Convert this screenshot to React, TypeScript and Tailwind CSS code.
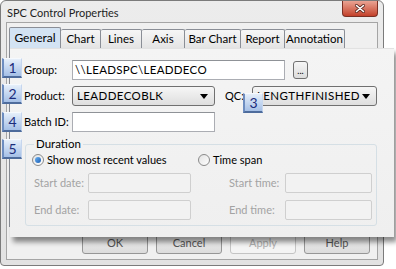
import React from 'react';

const font = { fontFamily: 'Lato, "Liberation Sans", sans-serif' };

const tabs = [
  { name: 'General', w: 'w-[52px]', active: true },
  { name: 'Chart', w: 'w-[40px]' },
  { name: 'Lines', w: 'w-[41px]' },
  { name: 'Axis', w: 'w-[43px]' },
  { name: 'Bar Chart', w: 'w-[56px]' },
  { name: 'Report', w: 'w-[44px]' },
  { name: 'Annotation', w: 'w-[60px]' },
];

function Badge({ n, className }: { n: string; className: string }) {
  return (
    <div
      className={`absolute w-[20px] h-[20px] flex items-center justify-center text-[14px] leading-none text-[#1c2c7c] bg-gradient-to-b from-[#e6effa] to-[#a4bfe6] border-t border-r border-t-[#f6f9fd] border-r-[#c6d6ee] border-b-2 border-l-2 border-b-[#4e6c9c] border-l-[#6d8dc0] ${className}`}
    >
      {n}
    </div>
  );
}

function Combo({ value, w }: { value: string; w: string }) {
  return (
    <div className={`${w} h-[20px] flex items-center rounded-[3px] border border-[#707070] bg-gradient-to-b from-[#f6f6f6] to-[#dedede] pl-[4px] pr-[6px]`}>
      <span className="flex-1 whitespace-nowrap overflow-hidden text-[11.5px] text-black tracking-[0.4px]">{value}</span>
      <svg width="8" height="5" viewBox="0 0 8 5" className="shrink-0">
        <path d="M0 0h8L4 5z" fill="#000" />
      </svg>
    </div>
  );
}

function Radio({ checked, label, className = '' }: { checked?: boolean; label: string; className?: string }) {
  return (
    <div className={`flex items-center gap-[3px] ${className}`}>
      <div className="w-[12px] h-[12px] rounded-full border border-[#8a8a8a] bg-gradient-to-br from-[#e2e2e2] to-[#ffffff] flex items-center justify-center">
        {checked && <div className="w-[6px] h-[6px] rounded-full bg-gradient-to-br from-[#6ab0f0] to-[#1a5fb4]" />}
      </div>
      <span className="whitespace-nowrap text-[11px] text-black">{label}</span>
    </div>
  );
}

function DisabledField({ label, lw, w }: { label: string; lw: string; w: string }) {
  return (
    <div className="flex items-center">
      <span className={`${lw} whitespace-nowrap text-[11px] text-[#a3a3a3]`}>{label}</span>
      <div className={`${w} h-[20px] border border-[#cfcfcf] rounded-[2px] bg-[#f2f2f2]`} />
    </div>
  );
}

function Button({ label, disabled }: { label: string; disabled?: boolean }) {
  return (
    <div
      className={`w-[66px] h-[23px] flex items-end justify-center pb-[2px] rounded-[3px] border text-[11px] ${
        disabled
          ? 'border-[#c4c4c4] bg-[#f4f4f4] text-[#b0b0b0]'
          : 'border-[#969696] bg-gradient-to-b from-[#f2f2f2] to-[#dcdcdc] text-[#555]'
      }`}
    >
      {label}
    </div>
  );
}

export default function App() {
  return (
    <div className="relative w-[396px] h-[269px] bg-white overflow-hidden" style={font}>
      {/* dialog window */}
      <div className="w-[384px] h-[266px] flex flex-col rounded-t-[6px] rounded-b-[4px] border border-[#7b7b7b] bg-gradient-to-b from-[#ececec] to-[#e2e2e2]">
        <div className="h-[21px] flex items-start">
          <span className="pl-[6px] pt-[4px] text-[11px] text-[#1e1e1e]">SPC Control Properties</span>
          <div className="ml-auto mr-[5px] w-[36px] h-[16px] rounded-b-[4px] border border-[#7a3024] border-t-0 bg-gradient-to-b from-[#e9a393] to-[#c23f29] flex items-center justify-center">
            <svg width="10" height="9" viewBox="0 0 10 9">
              <path d="M1.5 1.5l7 6M8.5 1.5l-7 6" stroke="#5a2a22" strokeWidth="3" strokeLinecap="round" />
              <path d="M1.5 1.5l7 6M8.5 1.5l-7 6" stroke="#fff" strokeWidth="1.6" strokeLinecap="round" />
            </svg>
          </div>
        </div>
        <div className="mx-[5px] h-[238px] flex flex-col border border-[#a5a5a5] bg-[#f0f0f0]">
          <div className="flex items-end h-[25px] pl-[2px]">
            {tabs.map((t) =>
              t.active ? (
                <div
                  key={t.name}
                  className={`${t.w} h-[21px] flex items-center justify-center border border-b-0 border-[#8a8e96] rounded-t-[2px] bg-[#d3e3f3] text-[12px] text-black`}
                >
                  {t.name}
                </div>
              ) : (
                <div
                  key={t.name}
                  className={`${t.w} h-[19px] flex items-center justify-center border border-l-0 border-b-0 border-[#8a8e96] rounded-t-[2px] bg-gradient-to-b from-[#f6f6f6] to-[#e4e4e4] whitespace-nowrap text-[11.5px] text-black`}
                >
                  {t.name}
                </div>
              )
            )}
          </div>
          <div className="flex-1 mx-[2px] border border-[#8a8e96] bg-[#f5f5f5]" />
          <div className="flex justify-end gap-[8px] pr-[7px] pb-[5px] pt-[4px]">
            <Button label="OK" />
            <Button label="Cancel" />
            <Button label="Apply" disabled />
            <Button label="Help" />
          </div>
        </div>
      </div>

      {/* magnified tab page overlay */}
      <div className="absolute left-0 top-[48px] w-[396px] h-[200px]">
        <div className="ml-[10px] w-[384px] h-[189px] flex flex-col bg-gradient-to-b from-[#f4f4f4] to-[#efefef] border-t border-[#e2e2e2] shadow-[3px_5px_5px_rgba(0,0,0,0.45)]">
          <div className="flex items-center h-[20px] mt-[11px] pl-[14px]">
            <span className="w-[48px] whitespace-nowrap text-[11px] text-black">Group:</span>
            <div className="w-[213px] h-[20px] flex items-center border border-[#abadb3] border-t-[#8f9297] bg-white pl-[2px] whitespace-nowrap text-[11.5px] text-black tracking-[0.3px]">
              \\LEADSPC\LEADDECO
            </div>
            <div className="ml-[8px] w-[15px] h-[18px] rounded-[3px] border border-[#707070] bg-gradient-to-b from-[#f6f6f6] to-[#dcdcdc] flex items-end justify-center pb-[3px] text-[9px] leading-none text-black">
              ...
            </div>
          </div>
          <div className="flex items-center h-[20px] mt-[6px] pl-[14px]">
            <span className="w-[48px] whitespace-nowrap text-[11px] text-black">Product:</span>
            <Combo value="LEADDECOBLK" w="w-[143px]" />
            <span className="ml-[10px] w-[27px] whitespace-nowrap text-[11px] text-black">QC:</span>
            <Combo value="LENGTHFINISHED" w="w-[125px]" />
          </div>
          <div className="flex items-center h-[20px] mt-[6px] pl-[14px]">
            <span className="w-[48px] whitespace-nowrap text-[11px] text-black">Batch ID:</span>
            <div className="w-[143px] h-[20px] border border-[#abadb3] border-t-[#8f9297] bg-white" />
          </div>
          <fieldset className="ml-[15px] mt-[5px] w-[352px] border border-[#d5dfe5] rounded-[3px] pl-[6px] pb-[5px]">
            <legend className="ml-[2px] px-[2px] text-[11.5px] leading-[14px] text-black">Duration</legend>
            <div className="flex items-center h-[14px] mt-[2px]">
              <Radio checked label="Show most recent values" className="w-[166px]" />
              <Radio label="Time span" />
            </div>
            <div className="flex items-center mt-[6px] pl-[2px]">
              <DisabledField label="Start date:" lw="w-[54px]" w="w-[103px]" />
              <div className="ml-[38px]">
                <DisabledField label="Start time:" lw="w-[56px]" w="w-[87px]" />
              </div>
            </div>
            <div className="flex items-center mt-[7px] pl-[2px]">
              <DisabledField label="End date:" lw="w-[54px]" w="w-[103px]" />
              <div className="ml-[38px]">
                <DisabledField label="End time:" lw="w-[56px]" w="w-[87px]" />
              </div>
            </div>
          </fieldset>
        </div>
        <Badge n="1" className="left-[2px] top-[10px]" />
        <Badge n="2" className="left-[2px] top-[36px]" />
        <Badge n="3" className="left-[243px] top-[45px]" />
        <Badge n="4" className="left-[2px] top-[64px]" />
        <Badge n="5" className="left-[2px] top-[91px]" />
      </div>
    </div>
  );
}
